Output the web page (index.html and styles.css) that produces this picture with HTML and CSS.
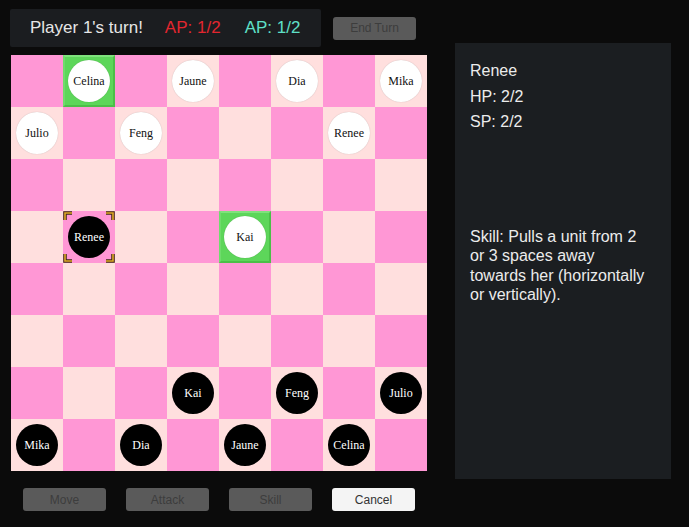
FILE: index.html
```html
<!DOCTYPE html>
<html lang="en">
<head>
  <meta charset="UTF-8">
  <title>Board</title>
  <link rel="stylesheet" href="styles.css">
</head>
<body>
  <div class="game">
    <div class="left">
      <div class="top">
        <div class="turn-bar">
          <span class="turn">Player 1's turn!</span>
          <span class="ap ap-red">AP: 1/2</span>
          <span class="ap ap-cyan">AP: 1/2</span>
        </div>
        <button class="btn disabled end-turn">End Turn</button>
      </div>
      <div class="board" id="board"></div>
      <div class="actions">
        <button class="btn disabled">Move</button>
        <button class="btn disabled">Attack</button>
        <button class="btn disabled">Skill</button>
        <button class="btn cancel">Cancel</button>
      </div>
    </div>
    <div class="info">
      <div class="stat">Renee</div>
      <div class="stat">HP: 2/2</div>
      <div class="stat">SP: 2/2</div>
      <p class="skill">Skill: Pulls a unit from 2 or 3 spaces away towards her (horizontally or vertically).</p>
    </div>
  </div>

  <script>
    // row, col, name, side, state
    const units = [
      [0, 1, 'Celina', 'w', 'target'],
      [0, 3, 'Jaune', 'w'],
      [0, 5, 'Dia', 'w'],
      [0, 7, 'Mika', 'w'],
      [1, 0, 'Julio', 'w'],
      [1, 2, 'Feng', 'w'],
      [1, 6, 'Renee', 'w'],
      [3, 1, 'Renee', 'b', 'selected'],
      [3, 4, 'Kai', 'w', 'target'],
      [6, 3, 'Kai', 'b'],
      [6, 5, 'Feng', 'b'],
      [6, 7, 'Julio', 'b'],
      [7, 0, 'Mika', 'b'],
      [7, 2, 'Dia', 'b'],
      [7, 4, 'Jaune', 'b'],
      [7, 6, 'Celina', 'b']
    ];

    const board = document.getElementById('board');
    for (let r = 0; r < 8; r++) {
      for (let c = 0; c < 8; c++) {
        const cell = document.createElement('div');
        cell.className = 'cell ' + ((r + c) % 2 === 0 ? 'dark' : 'light');
        const u = units.find(x => x[0] === r && x[1] === c);
        if (u) {
          if (u[4]) cell.classList.add(u[4]);
          const piece = document.createElement('div');
          piece.className = 'piece ' + (u[3] === 'w' ? 'white' : 'black');
          piece.textContent = u[2];
          cell.appendChild(piece);
          if (u[4] === 'selected') {
            cell.insertAdjacentHTML('beforeend',
              '<svg class="corners" width="52" height="52" viewBox="0 0 52 52">' +
              '<path d="M2 9V2h7M43 2h7v7M50 43v7h-7M9 50H2v-7" fill="none" stroke="#3a2a10" stroke-width="3.5"/>' +
              '<path d="M2 9V2h7M43 2h7v7M50 43v7h-7M9 50H2v-7" fill="none" stroke="#e0a82a" stroke-width="1.6"/>' +
              '</svg>');
          }
        }
        board.appendChild(cell);
      }
    }
  </script>
</body>
</html>
```

FILE: styles.css
```css
html, body {
  margin: 0;
  background: #0b0b0b;
  font-family: "Liberation Sans", Arial, sans-serif;
}

.game {
  display: flex;
  align-items: flex-start;
  padding: 9px 0 0 10px;
}

.left {
  width: 418px;
}

.top {
  display: flex;
  align-items: center;
  gap: 12px;
  height: 38px;
}

.turn-bar {
  display: flex;
  align-items: center;
  gap: 23px;
  width: 311px;
  height: 38px;
  box-sizing: border-box;
  padding-left: 20px;
  background: #1b1d20;
  border-radius: 2px;
  font-size: 17px;
  color: #e6e6e6;
}

.turn {
  margin-right: -1px;
}

.ap-red {
  color: #e3262f;
}

.ap-cyan {
  margin-left: 1px;
  color: #5fe0c8;
}

.btn {
  width: 83px;
  height: 23px;
  padding: 0;
  border: none;
  border-radius: 3px;
  font-family: "Liberation Sans", Arial, sans-serif;
  font-size: 12px;
}

.btn.disabled {
  background: #5a5a5a;
  color: #3d3d3d;
}

.btn.cancel {
  background: #f4f4f4;
  color: #333333;
}

.board {
  display: grid;
  grid-template-columns: repeat(8, 52px);
  grid-template-rows: repeat(8, 52px);
  margin: 8px 0 0 1px;
  width: 416px;
}

.cell {
  position: relative;
  display: flex;
  align-items: center;
  justify-content: center;
  box-sizing: border-box;
}

.cell.dark {
  background: #ff97d5;
}

.cell.light {
  background: #ffdfde;
}

.cell.target {
  background: #5dd65a;
  border: 2px solid #4cbf49;
  border-top-color: #7fe27c;
  border-left-color: #6fdc6c;
}

.piece {
  width: 42px;
  height: 42px;
  border-radius: 50%;
  display: flex;
  align-items: center;
  justify-content: center;
  font-family: "Liberation Serif", "Times New Roman", serif;
  font-size: 12px;
}

.piece.white {
  background: #ffffff;
  color: #111111;
  box-shadow: 0 0 1px rgba(0, 0, 0, 0.25);
}

.piece.black {
  background: #000000;
  color: #ffffff;
}

.corners {
  position: absolute;
  left: 0;
  top: 0;
}

.actions {
  display: flex;
  gap: 20px;
  margin: 17px 0 0 13px;
}

.info {
  width: 216px;
  height: 436px;
  box-sizing: border-box;
  margin: 34px 0 0 27px;
  padding: 15px 18px 0 15px;
  background: #1b1e21;
  color: #ececec;
  font-size: 16px;
}

.stat {
  line-height: 25.5px;
}

.skill {
  margin: 92px 0 0 0;
  line-height: 19.5px;
}
```
